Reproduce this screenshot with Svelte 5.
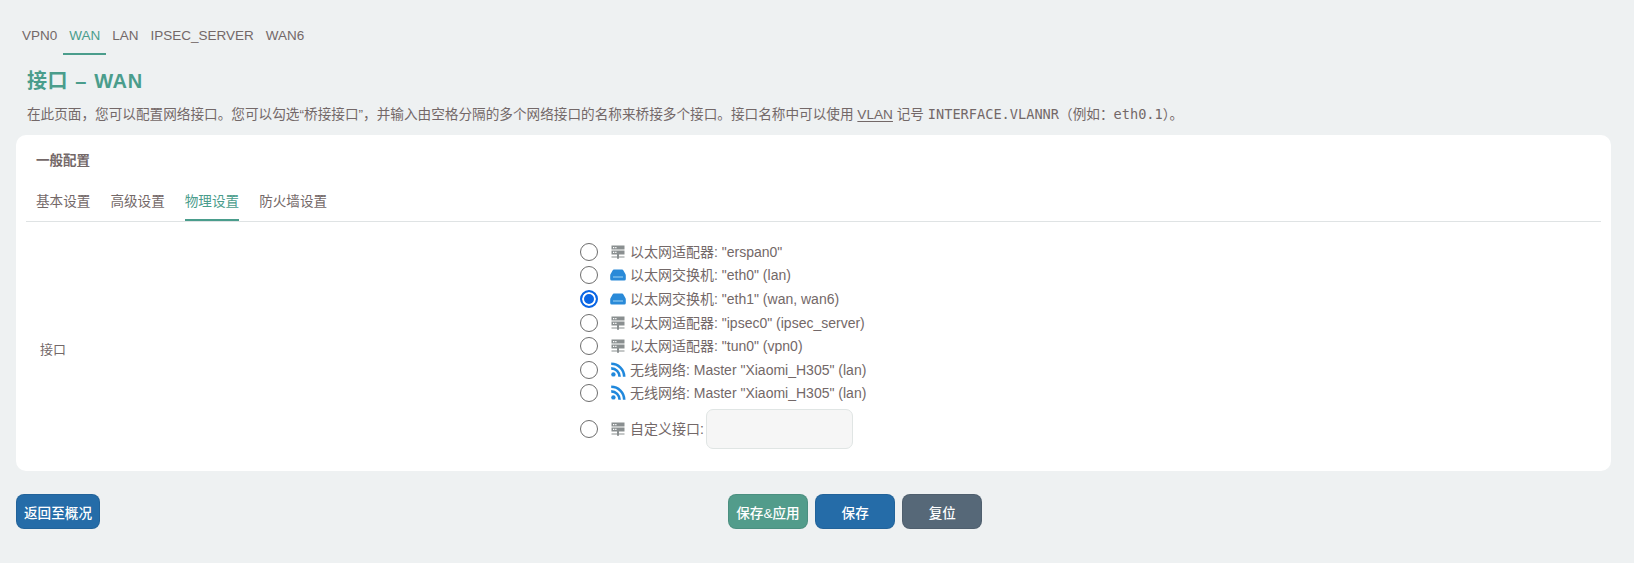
<script>
  const topTabs = ["VPN0", "WAN", "LAN", "IPSEC_SERVER", "WAN6"];
  const subTabs = ["基本设置", "高级设置", "物理设置", "防火墙设置"];
  const ifaces = [
    { icon: "server", text: '以太网适配器: "erspan0"' },
    { icon: "switch", text: '以太网交换机: "eth0" (lan)' },
    { icon: "switch", text: '以太网交换机: "eth1" (wan, wan6)', checked: true },
    { icon: "server", text: '以太网适配器: "ipsec0" (ipsec_server)' },
    { icon: "server", text: '以太网适配器: "tun0" (vpn0)' },
    { icon: "wifi", text: '无线网络: Master "Xiaomi_H305" (lan)' },
    { icon: "wifi", text: '无线网络: Master "Xiaomi_H305" (lan)' },
  ];
</script>

{#snippet icon(name)}
  <svg class="icon" viewBox="0 0 16 16" width="16" height="16">
    {#if name === "server"}
      <path fill="#8a8f90" d="M1.5 1.5h13v4h-13zM1.5 6.4h13v4h-13zM7 10.4h2v2h5.5v1.2H9v1.2H7v-1.2H1.5v-1.2H7z" />
      <path fill="#fff" d="M3 3h1.3v1.2H3zM5.2 3h1.3v1.2H5.2zM3 7.8h1.3V9H3zM5.2 7.8h1.3V9H5.2z" />
    {:else if name === "switch"}
      <path fill="#2a8ad8" d="M4 2.5h8q1 0 1.4 1L15.4 7q.4.8.4 1.6V12q0 1.5-1.5 1.5H1.7Q.2 13.5.2 12V8.6Q.2 7.8.6 7l2-3.5q.4-1 1.4-1z" />
      <path fill="#8cc8f0" d="M3 9.4h10v1.2H3z" />
    {:else}
      <circle cx="3.4" cy="12.4" r="2.2" fill="#2088dc" />
      <path fill="none" stroke="#2088dc" stroke-width="2.6" d="M1.2 6.4a8.4 8.4 0 0 1 8.4 8.4" />
      <path fill="none" stroke="#2088dc" stroke-width="2.6" d="M1.2 1.8a13 13 0 0 1 13 13" />
    {/if}
  </svg>
{/snippet}

<div class="page">
  <ul class="top-tabs">
    {#each topTabs as tab}
      <li class:active={tab === "WAN"}>{tab}</li>
    {/each}
  </ul>

  <h2>接口 – WAN</h2>
  <p class="desc">在此页面，您可以配置网络接口。您可以勾选“桥接接口”，并输入由空格分隔的多个网络接口的名称来桥接多个接口。接口名称中可以使用 <u>VLAN</u> 记号 <code>INTERFACE.VLANNR</code>（例如：<code>eth0.1</code>）。</p>

  <section class="card">
    <h3>一般配置</h3>
    <ul class="sub-tabs">
      {#each subTabs as tab}
        <li class:active={tab === "物理设置"}>{tab}</li>
      {/each}
    </ul>

    <div class="form-row">
      <div class="form-label">接口</div>
      <div class="options">
        {#each ifaces as item}
          <label class="option">
            <input type="radio" name="iface" checked={item.checked} />
            {@render icon(item.icon)}
            <span>{item.text}</span>
          </label>
        {/each}
        <label class="option custom">
          <input type="radio" name="iface" />
          {@render icon("server")}
          <span>自定义接口:</span>
          <input class="text-input" type="text" />
        </label>
      </div>
    </div>
  </section>

  <div class="actions">
    <button class="btn blue">返回至概况</button>
    <div class="center-btns">
      <button class="btn green">保存&amp;应用</button>
      <button class="btn blue">保存</button>
      <button class="btn gray">复位</button>
    </div>
  </div>
</div>

<style>
  :global(body) {
    margin: 0;
    background: #eef1f2;
  }

  .page {
    height: 563px;
    box-sizing: border-box;
    padding: 17px 23px 0 16px;
    color: #736868;
    font-family: "Liberation Sans", "Noto Sans CJK SC", sans-serif;
    font-size: 13px;
  }

  ul {
    list-style: none;
    margin: 0;
    padding: 0;
    display: flex;
  }

  .top-tabs {
    height: 38px;
    font-size: 13.5px;
  }

  .top-tabs li {
    padding: 11px 6px 0;
    box-sizing: border-box;
    height: 38px;
  }

  .top-tabs li.active {
    color: #4a9d8c;
    border-bottom: 2px solid #4a9d8c;
  }

  h2 {
    margin: 13px 0 0 11px;
    font-size: 20px;
    line-height: 26px;
    color: #4a9d8c;
    font-weight: 700;
    word-spacing: 1px;
    letter-spacing: 0.6px;
  }

  .desc {
    margin: 10px 0 0 11px;
    line-height: 20px;
    font-size: 13.64px;
  }

  u {
    text-underline-offset: 2px;
  }

  code {
    font-family: "DejaVu Sans Mono", monospace;
    font-size: 13.64px;
  }

  .card {
    margin-top: 10px;
    height: 336px;
    box-sizing: border-box;
    background: #fff;
    border-radius: 10px;
    padding: 16px 10px 0;
  }

  h3 {
    margin: 0 0 0 10px;
    font-size: 13.5px;
    line-height: 20px;
    font-weight: 700;
  }

  .sub-tabs {
    margin-top: 17px;
    height: 33px;
    gap: 20px;
    padding-left: 10px;
    border-bottom: 1px solid #dfe3e4;
  }

  .sub-tabs li {
    height: 33px;
    box-sizing: border-box;
    padding-top: 4px;
    line-height: 20px;
    font-size: 13.6px;
  }

  .sub-tabs li.active {
    color: #4a9d8c;
    border-bottom: 2px solid #4a9d8c;
  }

  .form-row {
    display: grid;
    grid-template-columns: 554px 1fr;
    align-items: center;
    margin-top: 18px;
  }

  .form-label {
    padding: 8px 0 0 14px;
  }

  .options {
    display: flex;
    flex-direction: column;
  }

  .option {
    display: flex;
    align-items: center;
    height: 23.6px;
    font-size: 14px;
  }

  .option span {
    position: relative;
    top: -1px;
  }

  .option.custom {
    height: 40px;
    margin-top: 4px;
  }

  input[type="radio"] {
    appearance: none;
    width: 18px;
    height: 18px;
    margin: 0 12px 0 0;
    border: 1px solid #6d6d6d;
    border-radius: 50%;
    background: #fff;
    flex: none;
  }

  input[type="radio"]:checked {
    border: 2px solid #0a66e4;
    box-shadow: inset 0 0 0 2px #fff;
    background: #0a66e4;
  }

  .icon {
    margin-right: 4px;
    flex: none;
  }

  .text-input {
    width: 147px;
    height: 40px;
    box-sizing: border-box;
    margin-left: 2px;
    background: #f6f6f6;
    border: 1px solid #e0e5e4;
    border-radius: 7px;
  }

  .actions {
    display: flex;
    margin-top: 23px;
  }

  .center-btns {
    display: flex;
    gap: 7.2px;
    margin-left: 628px;
  }

  .btn {
    height: 35px;
    width: 80px;
    padding: 0;
    border: 1px solid rgba(0, 0, 0, 0.08);
    border-radius: 8px;
    color: #fff;
    font-family: inherit;
    font-size: 13.6px;
    font-weight: 500;
  }

  .actions > .btn {
    width: 84px;
  }

  .blue {
    background: #256ca8;
  }

  .green {
    background: #529c8b;
  }

  .gray {
    background: #566878;
  }
</style>
